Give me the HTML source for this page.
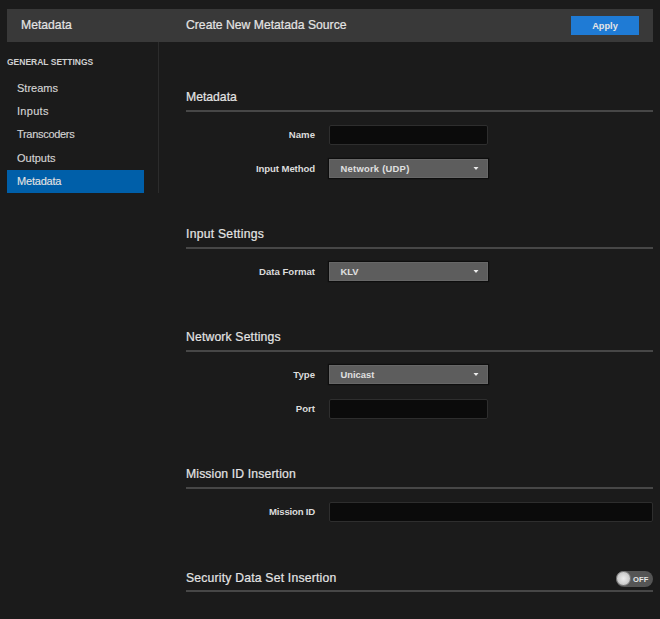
<!DOCTYPE html>
<html><head><meta charset="utf-8">
<style>
html,body{margin:0;padding:0;}
body{width:660px;height:619px;background:#1b1b1b;position:relative;overflow:hidden;font-family:"Liberation Sans",sans-serif;color:#d6d6d6;}
.a{position:absolute;white-space:nowrap;}
.t{position:absolute;white-space:nowrap;line-height:20px;height:20px;}
.hdr{left:7px;top:9px;width:646px;height:33px;background:#393939;}
.apply{left:571px;top:16px;width:68px;height:19px;background:#1f7bd5;}
.vdiv{left:158px;top:42px;width:1px;height:151px;background:#2c2c2c;}
.active{left:7px;top:170px;width:137px;height:23px;background:#005fa9;}
.line{left:186px;width:467px;height:2px;background:#474747;}
.inp{background:#0b0b0b;border:1px solid #2e2e2e;border-radius:2px;box-sizing:border-box;}
.sel{background:#5d5d5d;border:1px solid #676767;box-sizing:border-box;box-shadow:0 0 1px 1px rgba(0,0,0,.45);}
.caret{width:6px;height:4px;}
.h{font-size:12.2px;color:#e4e4e4;-webkit-text-stroke:0.2px #e4e4e4;}
.lab{font-size:9.6px;font-weight:bold;color:#dcdcdc;text-align:right;}
.sv{font-size:9.4px;font-weight:bold;color:#e0e0e0;}
.side{font-size:11px;color:#d4d4d4;-webkit-text-stroke:0.15px #d4d4d4;}
.toggle{left:616px;top:571px;width:37px;height:16px;border-radius:8px;background:#555;}
.knob{left:615.5px;top:571px;width:15px;height:15px;box-sizing:border-box;border-radius:50%;border:1px solid #7c7c7c;background:radial-gradient(circle at 50% 50%,#ececec 0%,#d6d6d6 45%,#b4b4b4 100%);}
</style></head><body>
<div class="a hdr"></div>
<div class="t h" style="left:21px;top:15px;">Metadata</div>
<div class="t h" style="left:186px;top:15px;">Create New Metatada Source</div>
<div class="a apply"></div>
<div class="t" style="left:571px;top:16px;width:68px;text-align:center;font-size:9.2px;font-weight:bold;color:#e6e6e6;">Apply</div>

<div class="a vdiv"></div>
<div class="t" style="left:7px;top:52px;font-size:8.5px;font-weight:bold;color:#d0d0d0;">GENERAL SETTINGS</div>
<div class="t side" style="left:17px;top:78px;">Streams</div>
<div class="t side" style="left:17px;top:101px;letter-spacing:0.3px;">Inputs</div>
<div class="t side" style="left:17px;top:124px;letter-spacing:-0.3px;">Transcoders</div>
<div class="t side" style="left:17px;top:148px;">Outputs</div>
<div class="a active"></div>
<div class="t side" style="left:17px;top:171px;color:#e6e6e6;letter-spacing:-0.2px;">Metadata</div>

<!-- Metadata section -->
<div class="t h" style="left:186px;top:87px;">Metadata</div>
<div class="a line" style="top:110px;"></div>
<div class="t lab" style="left:215px;width:100px;top:125px;">Name</div>
<div class="a inp" style="left:329px;top:125px;width:159px;height:20px;"></div>
<div class="t lab" style="left:215px;width:100px;top:159px;letter-spacing:-0.1px;">Input Method</div>
<div class="a sel" style="left:329px;top:159px;width:159px;height:19px;"></div>
<div class="t sv" style="left:340.5px;top:159px;letter-spacing:0.26px;">Network (UDP)</div>
<svg class="a caret" style="left:473px;top:167px;" width="6" height="4" viewBox="0 0 6 4"><polygon points="0.5,0 5.5,0 3,3" fill="#ececec"/></svg>

<!-- Input Settings -->
<div class="t h" style="left:186px;top:224px;letter-spacing:0.25px;">Input Settings</div>
<div class="a line" style="top:247px;"></div>
<div class="t lab" style="left:215px;width:100px;top:262px;">Data Format</div>
<div class="a sel" style="left:329px;top:262px;width:159px;height:19px;"></div>
<div class="t sv" style="left:340.5px;top:262px;">KLV</div>
<svg class="a caret" style="left:473px;top:270px;" width="6" height="4" viewBox="0 0 6 4"><polygon points="0.5,0 5.5,0 3,3" fill="#ececec"/></svg>

<!-- Network Settings -->
<div class="t h" style="left:186px;top:327px;letter-spacing:0.16px;">Network Settings</div>
<div class="a line" style="top:350px;"></div>
<div class="t lab" style="left:215px;width:100px;top:365px;">Type</div>
<div class="a sel" style="left:329px;top:365px;width:159px;height:19px;"></div>
<div class="t sv" style="left:340.5px;top:365px;">Unicast</div>
<svg class="a caret" style="left:473px;top:373px;" width="6" height="4" viewBox="0 0 6 4"><polygon points="0.5,0 5.5,0 3,3" fill="#ececec"/></svg>
<div class="t lab" style="left:215px;width:100px;top:399px;">Port</div>
<div class="a inp" style="left:329px;top:399px;width:159px;height:20px;"></div>

<!-- Mission ID -->
<div class="t h" style="left:186px;top:464px;letter-spacing:0.14px;">Mission ID Insertion</div>
<div class="a line" style="top:487px;"></div>
<div class="t lab" style="left:215px;width:100px;top:502px;letter-spacing:-0.2px;">Mission ID</div>
<div class="a inp" style="left:329px;top:502px;width:324px;height:20px;"></div>

<!-- Security -->
<div class="t h" style="left:186px;top:568px;letter-spacing:0.2px;">Security Data Set Insertion</div>
<div class="a line" style="top:590px;"></div>
<div class="a toggle"></div>
<div class="a knob"></div>
<div class="t" style="left:633px;top:569.5px;font-size:7.6px;letter-spacing:0.1px;font-weight:bold;color:#e6e6e6;">OFF</div>
</body></html>
